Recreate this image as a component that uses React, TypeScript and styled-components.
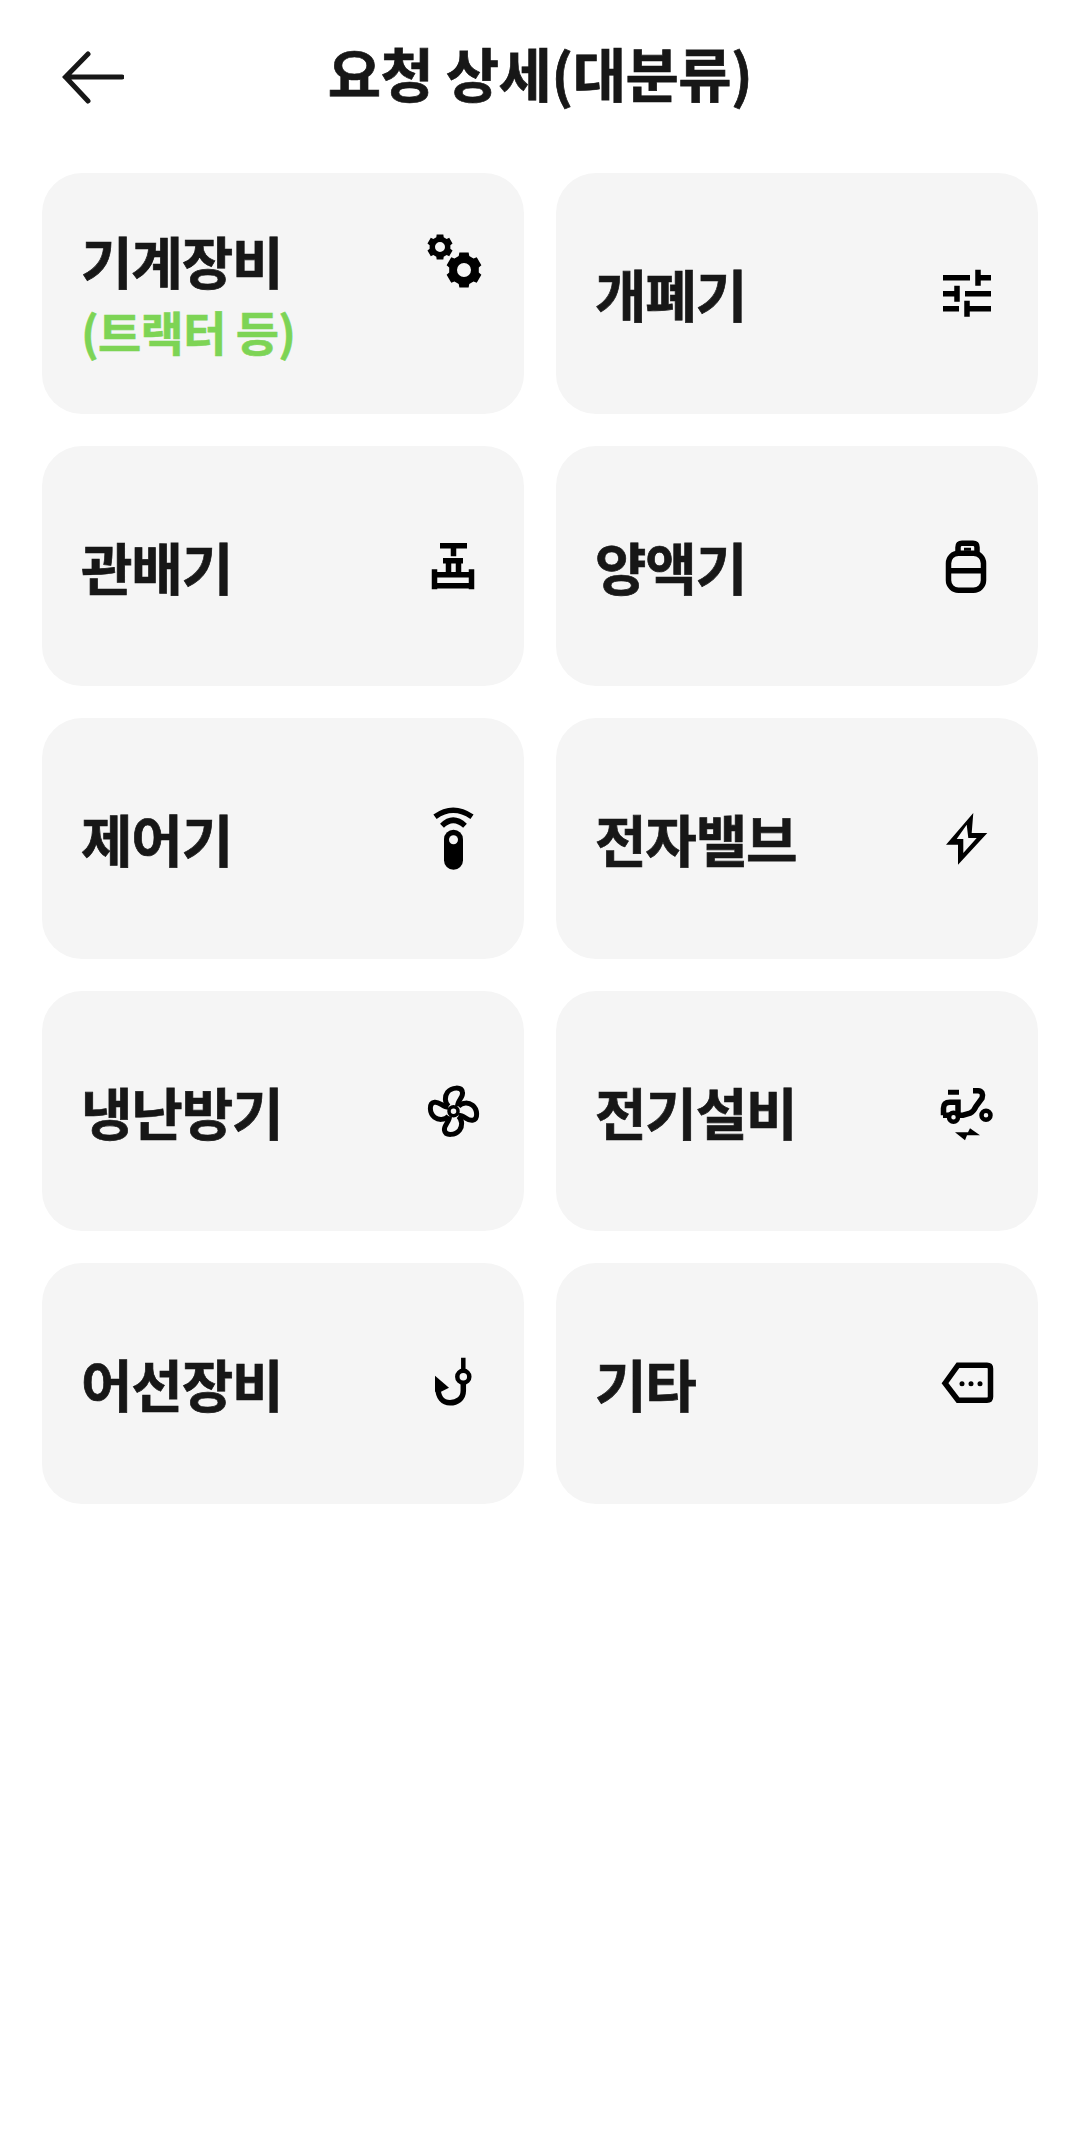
import React from "react";
import styled, { createGlobalStyle } from "styled-components";

const Global = createGlobalStyle`
  html, body { margin: 0; padding: 0; background: #fff; }
  body { font-family: "Noto Sans CJK KR", "Noto Sans", sans-serif; color: #171717; }
`;

const Page = styled.div`
  width: 1080px;
  height: 2130px;
  box-sizing: border-box;
  padding: 0 42px;
`;

const Header = styled.header`
  display: grid;
  grid-template-columns: 1fr auto 1fr;
  align-items: center;
  height: 173px;
  box-sizing: border-box;
  padding-bottom: 30px;
`;

const BackButton = styled.svg`
  display: block;
  width: 64px;
  height: 64px;
  margin: 10px 0 0 18px;
`;

const Title = styled.h1`
  margin: 0;
  font-size: 58px;
  line-height: 72px;
  font-weight: 700;
  letter-spacing: -0.6px;
  -webkit-text-stroke: 0.7px #171717;
  white-space: nowrap;
`;

const Grid = styled.div`
  display: grid;
  grid-template-columns: 482px 482px;
  column-gap: 32px;
  row-gap: 32px;
`;

const Card = styled.div`
  height: 240.5px;
  border-radius: 40px;
  background: #f5f5f5;
  display: flex;
  align-items: center;
  justify-content: space-between;
  box-sizing: border-box;
  padding: 0 40px 0 39px;
`;

const Labels = styled.div`
  display: flex;
  flex-direction: column;
`;

const Name = styled.div`
  font-size: 56px;
  line-height: 72px;
  font-weight: 700;
  letter-spacing: -1.2px;
  -webkit-text-stroke: 0.7px #171717;
  white-space: nowrap;
`;

const Sub = styled.div`
  margin-top: 4px;
  font-size: 47px;
  line-height: 62px;
  font-weight: 700;
  letter-spacing: -0.7px;
  color: #7dd455;
  -webkit-text-stroke: 0.6px #7dd455;
  white-space: nowrap;
`;

const Icon = styled.svg<{ $top?: boolean }>`
  display: block;
  flex: none;
  width: 64px;
  height: 64px;
  overflow: visible;
  align-self: ${(p) => (p.$top ? "flex-start" : "center")};
  margin-top: ${(p) => (p.$top ? "52px" : "0")};
  fill: none;
  stroke: #000;
  stroke-width: 5.5;
`;

function gearPath(cx: number, cy: number, outer: number, body: number, hole: number) {
  const pts: string[] = [];
  for (let i = 0; i < 6; i++) {
    const a = (Math.PI / 3) * i - Math.PI / 2;
    const w = 0.26;
    const g = 0.36;
    const p = (r: number, t: number) =>
      `${(cx + r * Math.cos(t)).toFixed(2)} ${(cy + r * Math.sin(t)).toFixed(2)}`;
    pts.push(p(body, a - g), p(outer, a - w), p(outer, a + w), p(body, a + g));
  }
  const h = `M${cx - hole} ${cy}a${hole} ${hole} 0 1 0 ${hole * 2} 0a${hole} ${hole} 0 1 0 ${-hole * 2} 0Z`;
  return `M${pts.join("L")}Z${h}`;
}

const Gears = () => (
  <Icon $top viewBox="420 225 64 64">
    <path d={gearPath(440, 247, 13, 10.5, 5)} fill="#000" fillRule="evenodd" stroke="none" />
    <path d={gearPath(464, 270, 18, 15, 7)} fill="#000" fillRule="evenodd" stroke="none" />
  </Icon>
);

const Sliders = () => (
  <Icon viewBox="934 261.25 64 64">
    <path d="M943 278H970M978 270V286M978 278H991M943 294H956M957 286V302M965 294H991M943 309H959M967 301V317M967 309H991" />
  </Icon>
);

const Valve = () => (
  <Icon viewBox="420 533.75 64 64">
    <path d="M440 545.5H467M453.5 548V556M443 560.5H463M448.5 563V574.5M458.5 563V574.5M434.5 569V589M471.5 569V589M437 574.5H469M437 585.5H469" />
  </Icon>
);

const Bottle = () => (
  <Icon viewBox="934 533.75 64 64">
    <rect x="948.5" y="553" width="35" height="37" rx="10" />
    <path d="M948.5 570.5H983.5M958 553V547Q958 543 962 543H973Q977 543 977 547V553" />
    <path d="M964 549H971" strokeWidth="3" />
  </Icon>
);

const Remote = () => (
  <Icon viewBox="420 806.25 64 64">
    <path d="M435 817Q453 804 472 817M442 826Q453 815 465 826" />
    <rect x="444" y="830" width="19" height="40" rx="9.5" fill="#000" stroke="none" />
    <circle cx="453.5" cy="840" r="4.5" fill="#f5f5f5" stroke="none" />
  </Icon>
);

const Bolt = () => (
  <Icon viewBox="934 806.25 64 64">
    <path
      d="M973.3 813.3L946 845H958V865L987.3 833.3H971.7ZM966.7 825L956.7 839.3H963.3V853.3L976.7 838.3H968.3Z"
      fill="#000"
      fillRule="evenodd"
      stroke="none"
    />
  </Icon>
);

const Fan = () => (
  <Icon viewBox="420 1078.75 64 64">
    <g transform="translate(453.5 1111)">
      {[0, 90, 180, 270].map((r) => (
        <path
          key={r}
          transform={`rotate(${r})`}
          d="M-5-5C-9-9-9-15-6-19C-2-24 8-25 9-19C10-14 4-11 4-5"
          strokeWidth="5"
        />
      ))}
      <circle r="4.5" strokeWidth="3.5" fill="#f5f5f5" />
    </g>
  </Icon>
);

const Scooter = () => (
  <Icon viewBox="934 1078.75 64 64">
    <path d="M948 1092H959" strokeWidth="5" />
    <path d="M943.5 1115V1108Q943.5 1102 950 1102H958V1113" />
    <path d="M943 1115H963L970 1113Q974 1111 976 1106L982 1098Q984 1091 978 1090.5H973" />
    <circle cx="953.5" cy="1117" r="4.5" strokeWidth="4.5" fill="#f5f5f5" />
    <circle cx="986" cy="1115" r="4.5" strokeWidth="4.5" />
    <polygon points="955,1132 968,1132 970,1128 980,1135 967,1135 965,1140" fill="#000" stroke="none" />
  </Icon>
);

const Hook = () => (
  <Icon viewBox="420 1351.25 64 64">
    <path d="M463.3 1358V1370" strokeWidth="4.5" />
    <circle cx="463.3" cy="1377" r="6" strokeWidth="4.5" />
    <path d="M463.3 1384V1391C463.3 1399 457 1403 450 1403C443 1403 438 1398 438 1388" />
    <polygon points="435,1376 449,1388 441,1392 435,1392" fill="#000" stroke="none" />
  </Icon>
);

const Tag = () => (
  <Icon viewBox="934 1351.25 64 64">
    <path d="M945 1383.5L958 1365.5H987Q990.5 1365.5 990.5 1369V1397Q990.5 1400.5 987 1400.5H958Z" />
    <circle cx="962" cy="1384" r="2.5" fill="#000" stroke="none" />
    <circle cx="971" cy="1384" r="2.5" fill="#000" stroke="none" />
    <circle cx="980" cy="1384" r="2.5" fill="#000" stroke="none" />
  </Icon>
);

const items: { name: string; sub?: string; icon: React.ReactNode }[] = [
  { name: "기계장비", sub: "(트랙터 등)", icon: <Gears /> },
  { name: "개폐기", icon: <Sliders /> },
  { name: "관배기", icon: <Valve /> },
  { name: "양액기", icon: <Bottle /> },
  { name: "제어기", icon: <Remote /> },
  { name: "전자밸브", icon: <Bolt /> },
  { name: "냉난방기", icon: <Fan /> },
  { name: "전기설비", icon: <Scooter /> },
  { name: "어선장비", icon: <Hook /> },
  { name: "기타", icon: <Tag /> },
];

export default function App() {
  return (
    <Page>
      <Global />
      <Header>
        <BackButton viewBox="60 45 64 64" fill="none" stroke="#171717" strokeWidth="5" strokeLinecap="round">
          <path d="M88 54L65.5 77L88 101M65.5 77H122" />
        </BackButton>
        <Title>요청 상세(대분류)</Title>
        <span />
      </Header>
      <Grid>
        {items.map((it) => (
          <Card key={it.name}>
            <Labels>
              <Name>{it.name}</Name>
              {it.sub && <Sub>{it.sub}</Sub>}
            </Labels>
            {it.icon}
          </Card>
        ))}
      </Grid>
    </Page>
  );
}
